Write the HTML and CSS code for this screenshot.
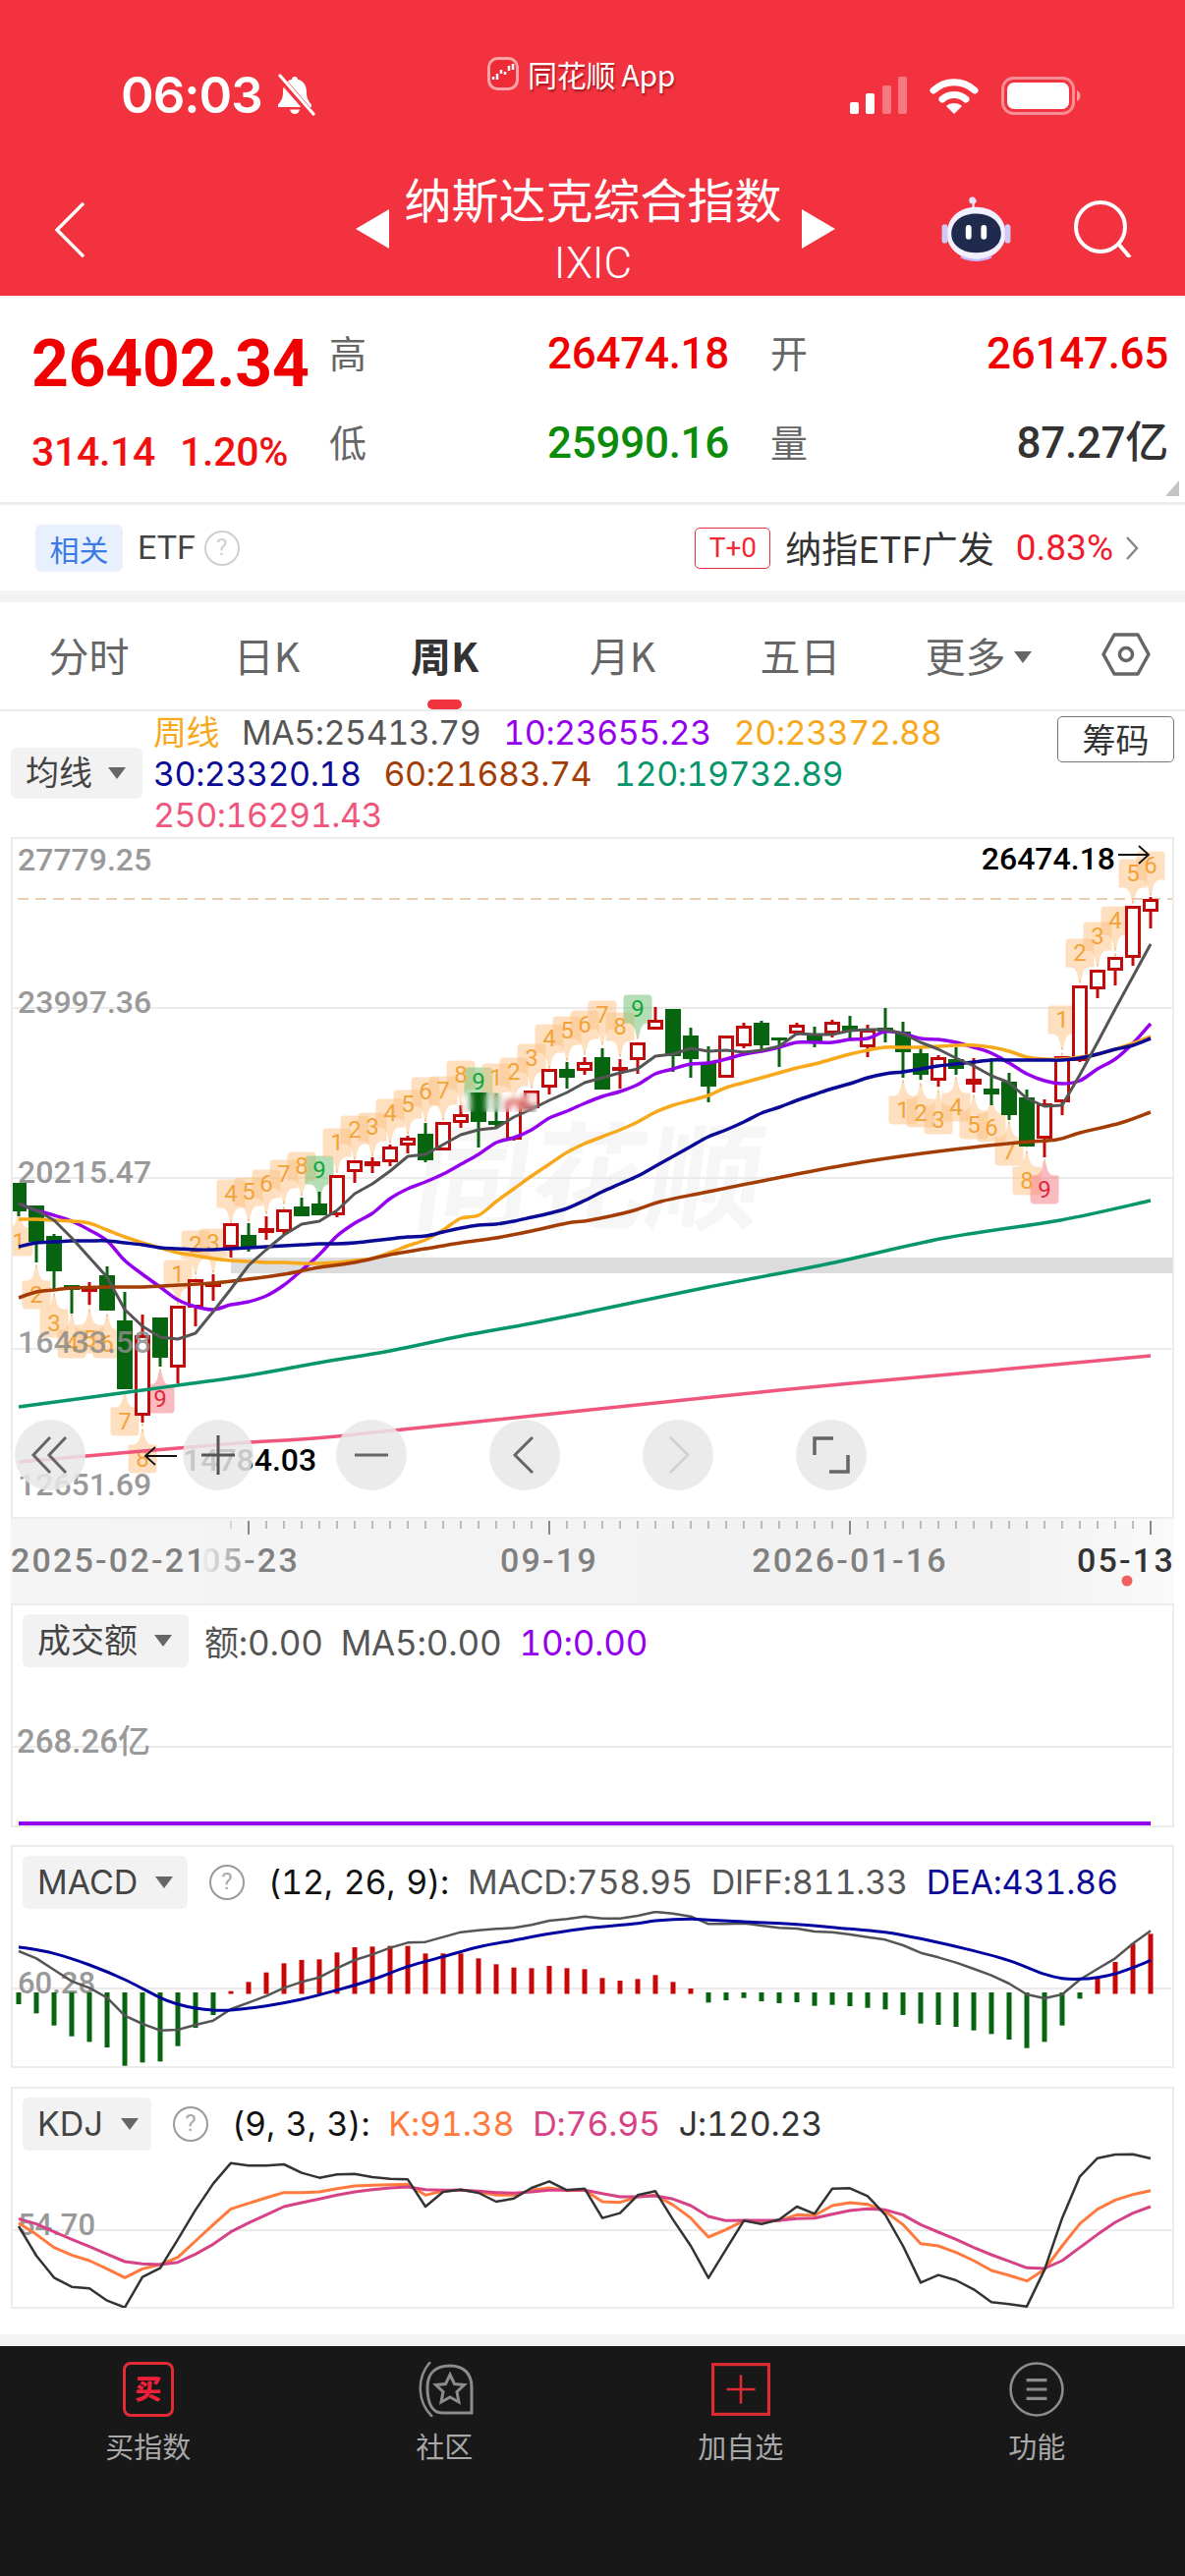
FILE: index.html
```html
<!DOCTYPE html>
<html lang="zh-CN">
<head>
<meta charset="utf-8">
<title>纳斯达克综合指数</title>
<link rel="stylesheet" href="styles.css">
</head>
<body>
<div class="page">
  <header class="hdr">
    <div class="status">
      <div class="st-left">
        <span class="time">06:03</span>
        <svg class="bell" viewBox="0 0 42 44"><path d="M21 3c-1.800 0-3 1.200-3 2.800C11.500 7.500 9 13 9 19c0 6-2 9-5 12.500V34h34v-2.500C35 28 33 25 33 19c0-6-2.500-11.500-9-13.200C24 4.200 22.800 3 21 3zM16 36.500c.8 3 2.600 4.500 5 4.500s4.200-1.500 5-4.500z" fill="#fff"/><path d="M5 3l34 39" stroke="#f2323f" stroke-width="7"/><path d="M6 2l34 39" stroke="#fff" stroke-width="3.200" stroke-linecap="round"/></svg>
      </div>
      <div class="st-app">
        <svg class="app-logo" viewBox="0 0 32 34"><rect x="1.500" y="1.500" width="29" height="31" rx="9" fill="#ee2b36" stroke="#f9a5a8" stroke-width="3"/><path d="M6 20v3M10 17v6M14 13v4M18 15v3M22 9v5M26 7v6" stroke="#fff" stroke-width="2.500"/></svg>
        <span class="app-name">同花顺 App</span>
      </div>
      <div class="st-right">
        <svg class="signal" viewBox="0 0 58 38"><rect x="0" y="26" width="9" height="12" rx="2" fill="#fff"/><rect x="16" y="17" width="9" height="21" rx="2" fill="#fff"/><rect x="33" y="9" width="9" height="29" rx="2" fill="#fff" opacity=".35"/><rect x="49" y="0" width="9" height="38" rx="2" fill="#fff" opacity=".35"/></svg>
        <svg class="wifi" viewBox="0 0 50 38"><path d="M4 14C16 3 34 3 46 14" stroke="#fff" stroke-width="7" fill="none" stroke-linecap="round"/><path d="M13 23c7-6 17-6 24 0" stroke="#fff" stroke-width="7" fill="none" stroke-linecap="round"/><path d="M25 38l-8-8c4-4 12-4 16 0z" fill="#fff"/></svg>
        <svg class="battery" viewBox="0 0 81 39"><rect x="1.500" y="1.500" width="72" height="36" rx="11" fill="none" stroke="#fff" stroke-opacity=".45" stroke-width="3"/><rect x="6" y="6" width="63" height="27" rx="7" fill="#fff"/><path d="M77 14c2.500 1 3.500 3 3.500 5.500S79.500 24 77 25z" fill="#fff" fill-opacity=".5"/></svg>
      </div>
    </div>
    <div class="nav">
      <svg class="back" viewBox="0 0 33 60" preserveAspectRatio="none"><path d="M30 2L3 30l27 28" fill="none" stroke="#fff" stroke-width="3.500"/></svg>
      <div class="title-wrap">
        <span class="tri-l"></span>
        <div class="title-stack">
          <div class="title">纳斯达克综合指数</div>
          <div class="code">IXIC</div>
        </div>
        <span class="tri-r"></span>
      </div>
      <div class="nav-right">
        <svg class="robot" viewBox="0 0 72 68"><path d="M34 14c-2-4-1-8 2-10" stroke="#e8e4ff" stroke-width="2.500" fill="none"/><circle cx="32" cy="4" r="3.500" fill="#e8e4ff"/><path d="M36 11c17 0 29 10 31 26 1 16-13 29-31 29S4 53 5 37C7 21 19 11 36 11z" fill="#f2f0ff"/><rect x="0" y="29" width="6" height="20" rx="3" fill="#cfc9f5"/><rect x="66" y="29" width="6" height="20" rx="3" fill="#cfc9f5"/><path d="M36 18c14 0 25 7 26 20 1 12-10 21-26 21S9 50 10 38c1-13 12-20 26-20z" fill="#1f2a4d"/><rect x="25" y="30" width="6" height="15" rx="3" fill="#fff"/><rect x="41" y="30" width="6" height="15" rx="3" fill="#fff"/><path d="M20 63c10 5 22 5 32 0" stroke="#c9b8ff" stroke-width="2.500" fill="none"/></svg>
        <svg class="search" viewBox="0 0 60 58"><circle cx="28" cy="27" r="25" fill="none" stroke="#fff" stroke-width="4"/><path d="M46 44l12 14" stroke="#fff" stroke-width="4"/></svg>
      </div>
    </div>
  </header>

  <section class="quote">
    <div class="q-left">
      <div class="q-price">26402.34</div>
      <div class="q-sub"><span>314.14</span><span>1.20%</span></div>
    </div>
    <div class="q-grid">
      <div class="q-cell"><span class="q-lab">高</span><span class="q-val red">26474.18</span></div>
      <div class="q-cell"><span class="q-lab">开</span><span class="q-val red">26147.65</span></div>
      <div class="q-cell"><span class="q-lab">低</span><span class="q-val green">25990.16</span></div>
      <div class="q-cell"><span class="q-lab">量</span><span class="q-val dark">87.27亿</span></div>
    </div>
    <span class="q-corner"></span>
  </section>

  <section class="etf">
    <div class="etf-left">
      <span class="etf-chip">相关</span>
      <span class="etf-name">ETF</span>
      <span class="help light">?</span>
    </div>
    <div class="etf-right">
      <span class="t0">T+0</span>
      <span class="etf-fund">纳指ETF广发</span>
      <span class="etf-pct">0.83%</span>
      <svg class="etf-chev" viewBox="0 0 14 26"><path d="M2 2l10 11L2 24" fill="none" stroke="#888" stroke-width="2.500"/></svg>
    </div>
  </section>
  <div class="strip"></div>

  <nav class="tabs">
    <div class="tab">分时</div>
    <div class="tab">日K</div>
    <div class="tab active">周K</div>
    <div class="tab">月K</div>
    <div class="tab">五日</div>
    <div class="tab">更多<span class="tab-tri"></span></div>
    <svg class="hex" viewBox="0 0 50 44"><path d="M13 2h24l11 20-11 20H13L2 22z" fill="none" stroke="#666" stroke-width="3.500" stroke-linejoin="round"/><circle cx="25" cy="22" r="6.500" fill="none" stroke="#666" stroke-width="3.500"/></svg>
  </nav>

  <section class="legend">
    <div class="chip chip-ma">均线<span class="chip-tri"></span></div>
    <div class="legend-lines">
      <div class="lg-row"><span class="c-orange">周线</span><span class="c-grey">MA5:25413.79</span><span class="c-purple">10:23655.23</span><span class="c-orange">20:23372.88</span></div>
      <div class="lg-row"><span class="c-navy">30:23320.18</span><span class="c-brown">60:21683.74</span><span class="c-teal">120:19732.89</span></div>
      <div class="lg-row"><span class="c-pink">250:16291.43</span></div>
    </div>
    <div class="chip-btn">筹码</div>
  </section>

  <section class="panel main-panel">
    <svg id="main" class="plot" viewBox="13 854 1180 690" width="1180" height="690"></svg>
    <div class="blur-patch"></div>
    <div class="ctrls">
      <div class="ctrl"><svg viewBox="0 0 40 40"><path d="M20 2L3 20l17 18M36 2L19 20l17 18" fill="none" stroke="#666" stroke-width="3"/></svg></div>
      <div class="ctrl ctrl-plus"><svg viewBox="0 0 40 40"><path d="M20 0v40M3 20h34" fill="none" stroke="#555" stroke-width="3"/></svg></div>
      <div class="ctrl"><svg viewBox="0 0 40 40"><path d="M3 20h34" fill="none" stroke="#666" stroke-width="3"/></svg></div>
      <div class="ctrl"><svg viewBox="0 0 40 40"><path d="M28 2L10 20l18 18" fill="none" stroke="#666" stroke-width="3"/></svg></div>
      <div class="ctrl"><svg viewBox="0 0 40 40"><path d="M12 2l18 18-18 18" fill="none" stroke="#d2d2d2" stroke-width="3"/></svg></div>
      <div class="ctrl"><svg viewBox="0 0 40 40"><path d="M22 3H3v17M37 20v17H18" fill="none" stroke="#666" stroke-width="3.500"/></svg></div>
    </div>
  </section>

  <section class="axis">
    <svg id="axis" class="plot" viewBox="11 1546 1184 86" width="1184" height="86">
      <defs><linearGradient id="fade"><stop offset="0" stop-color="#f0f0f0"/><stop offset=".55" stop-color="#808080"/></linearGradient></defs>
    </svg>
  </section>

  <section class="panel vol-panel">
    <div class="pn-head">
      <div class="chip chip-vol">成交额<span class="chip-tri"></span></div>
      <div class="vol-vals"><span class="c-grey">额:0.00</span><span class="c-grey">MA5:0.00</span><span class="c-purple">10:0.00</span></div>
    </div>
    <svg id="vol" class="plot" viewBox="13 1699 1180 159" width="1180" height="159"></svg>
  </section>

  <section class="panel macd-panel">
    <div class="pn-head">
      <div class="chip chip-macd">MACD<span class="chip-tri"></span></div>
      <span class="help">?</span>
      <div class="ind-vals"><span class="c-black">(12, 26, 9):</span><span class="c-grey">MACD:758.95</span><span class="c-grey">DIFF:811.33</span><span class="c-navy">DEA:431.86</span></div>
    </div>
    <svg id="macd" class="plot" viewBox="13 1945 1180 158" width="1180" height="158"></svg>
  </section>

  <section class="panel kdj-panel">
    <div class="pn-head">
      <div class="chip chip-kdj">KDJ<span class="chip-tri"></span></div>
      <span class="help">?</span>
      <div class="ind-vals"><span class="c-black">(9, 3, 3):</span><span class="c-k">K:91.38</span><span class="c-d">D:76.95</span><span class="c-j">J:120.23</span></div>
    </div>
    <svg id="kdj" class="plot" viewBox="13 2190 1180 158" width="1180" height="158"></svg>
  </section>

  <div class="foot-gap"></div>

  <footer class="bar">
    <div class="bar-item">
      <span class="ico-buy">买</span>
      <span class="bar-lab">买指数</span>
    </div>
    <div class="bar-item">
      <svg class="bar-ico" viewBox="0 0 60 56"><path d="M16 0C2 16 2 40 18 56" fill="none" stroke="#8c8c8c" stroke-width="2.500"/><path d="M58 52H28C18 52 13 42 13 26 13 12 21 4 36 4s22 9 22 22z" fill="none" stroke="#8c8c8c" stroke-width="3"/><path d="M36 13l4.500 9.500 10 1-7.500 7 2 10.500-9-5-9 5 2-10.500-7.500-7 10-1z" fill="none" stroke="#8c8c8c" stroke-width="3"/></svg>
      <span class="bar-lab">社区</span>
    </div>
    <div class="bar-item">
      <svg class="bar-ico" viewBox="0 0 58 52"><rect x="1.500" y="1.500" width="55" height="49" fill="none" stroke="#e02b32" stroke-width="3"/><path d="M29 12v28M15 26h28" stroke="#e02b32" stroke-width="2.500"/></svg>
      <span class="bar-lab">加自选</span>
    </div>
    <div class="bar-item">
      <svg class="bar-ico" viewBox="0 0 54 54"><circle cx="27" cy="27" r="25.500" fill="none" stroke="#8c8c8c" stroke-width="2.500"/><path d="M17 18h20M17 27h20M17 36h20" stroke="#8c8c8c" stroke-width="3"/></svg>
      <span class="bar-lab">功能</span>
    </div>
  </footer>
</div>
<script src="chart.js"></script>
</body>
</html>
```
FILE: styles.css
```css
* { box-sizing: border-box; }
html, body { margin: 0; padding: 0; background: #fff; }
body { font-family: Roboto, "Noto Sans CJK SC", sans-serif; color: #333; }
.page { width: 1206px; height: 2622px; overflow: hidden; display: flex; flex-direction: column; }

.hdr { background: #f2323f; height: 301px; color: #fff; flex: none; }
.status { display: grid; grid-template-columns: 371px 189px 1fr; height: 62px; padding: 58px 106px 0 123px; box-sizing: content-box; }
.st-left { display: flex; align-items: center; gap: 12px; padding-top: 8px; }
.time { font: 600 51px/62px Inter, sans-serif; letter-spacing: -1px; }
.bell { width: 42px; height: 44px; }
.st-app { display: flex; gap: 9px; height: 36px; align-items: center; margin: -1px 0 0 2px; }
.app-logo { width: 32px; height: 34px; flex: none; }
.app-name { font: 400 30px/36px "Noto Sans CJK SC", sans-serif; white-space: nowrap; text-shadow: 1px 2px 2px rgba(90,0,0,.55); letter-spacing: -.3px; }
.st-right { display: flex; align-items: center; justify-content: flex-end; gap: 23px; padding-top: 8px; }
.signal { width: 58px; height: 38px; }
.wifi { width: 50px; height: 38px; }
.battery { width: 81px; height: 39px; }

.nav { display: grid; grid-template-columns: 362px 488px 1fr; margin-top: 64px; height: 104px; }
.back { width: 33px; height: 58px; margin: 21px 0 0 55px; }
.title-wrap { display: flex; justify-content: space-between; align-items: flex-start; }
.tri-l, .tri-r { width: 0; height: 0; margin-top: 29px; border-top: 20px solid transparent; border-bottom: 20px solid transparent; }
.tri-l { border-right: 34px solid #fff; }
.tri-r { border-left: 34px solid #fff; }
.title-stack { text-align: center; margin-left: -5px; }
.title { font: 400 48px/60px "Noto Sans CJK SC", sans-serif; white-space: nowrap; margin-top: -13px; }
.code { font: 300 44px/46px Roboto, sans-serif; margin-top: 14px; }
.nav-right { display: flex; padding: 16px 0 0 108px; gap: 63px; align-items: flex-start; }
.robot { width: 71px; height: 66px; }
.search { width: 60px; height: 58px; margin-top: 4px; }

.quote { height: 210px; position: relative; display: flex; padding-left: 32px; flex: none; }
.q-left { width: 303px; }
.q-price { font: 700 66px/80px Roboto, sans-serif; color: #f00000; letter-spacing: -.2px; margin-top: 30px; }
.q-sub { display: flex; gap: 25px; font: 500 41px/48px Roboto, sans-serif; color: #f01010; margin-top: 25px; letter-spacing: -.3px; }
.q-grid { display: grid; grid-template-columns: 407px 405px; column-gap: 42px; grid-auto-rows: 91px; padding-top: 32px; }
.q-cell { display: flex; justify-content: space-between; align-items: center; height: 54px; }
.q-lab { font: 400 38px/54px "Noto Sans CJK SC", sans-serif; color: #666; margin-bottom: 4px; }
.q-val { font: 500 44px/54px Roboto, "Noto Sans CJK SC", sans-serif; letter-spacing: -.3px; }
.red { color: #f00000; }
.green { color: #0a8c0a; }
.dark { color: #333; }
.q-corner { position: absolute; right: 6px; bottom: 6px; width: 0; height: 0; border-bottom: 16px solid #c4c4c4; border-left: 14px solid transparent; }

.etf { height: 90px; border-top: 3px solid #eee; display: flex; justify-content: space-between; align-items: center; padding: 0 47px 0 36px; flex: none; }
.etf-left, .etf-right { display: flex; align-items: center; }
.etf-chip { width: 89px; height: 48px; background: #e9f0fd; border-radius: 6px; color: #3c7be3; font: 400 30px/48px "Noto Sans CJK SC", sans-serif; text-align: center; }
.etf-name { font: 400 34px/49px Roboto, sans-serif; margin-left: 15px; color: #444; }
.help { width: 36px; height: 36px; border: 2.500px solid #9a9a9a; border-radius: 50%; color: #aaa; font: 400 24px/31px Roboto, sans-serif; text-align: center; flex: none; }
.help.light { border-color: #cfcfcf; color: #cfcfcf; margin-left: 9px; }
.t0 { width: 77px; height: 42px; border: 1.500px solid #e8303c; border-radius: 5px; color: #ee2b36; font: 400 28px/39px Roboto, sans-serif; text-align: center; }
.etf-fund { font: 400 37px/49px "Noto Sans CJK SC", sans-serif; margin-left: 15px; color: #333; white-space: nowrap; }
.etf-pct { font: 400 37px/49px Roboto, sans-serif; color: #ee1c2c; margin-left: 22px; }
.etf-chev { width: 14px; height: 26px; margin-left: 12px; }

.strip { height: 19px; background: linear-gradient(#f3f3f3 12px, #fff 12px); flex: none; }
.foot-gap { height: 38px; background: linear-gradient(#fff 26px, #f3f3f3 26px); flex: none; }

.tabs { height: 104px; border-bottom: 2px solid #eaeaea; display: grid; grid-template-columns: repeat(6, 181px) 1fr; align-items: start; flex: none; }
.tab { font: 400 41px/60px "Noto Sans CJK SC", Roboto, sans-serif; color: #666; text-align: center; padding-top: 16px; height: 102px; position: relative; white-space: nowrap; }
.tab.active { color: #333; font-weight: 700; }
.tab.active::after { content: ""; position: absolute; left: 73px; bottom: 0; width: 35px; height: 10px; border-radius: 5px; background: #f0333f; }
.tab-tri { display: inline-block; width: 0; height: 0; border-left: 9px solid transparent; border-right: 9px solid transparent; border-top: 12px solid #666; margin-left: 8px; vertical-align: 9px; }
.hex { width: 50px; height: 44px; margin: 24px 0 0 35px; }

.legend { height: 128px; position: relative; display: flex; flex: none; }
.chip { background: #f2f2f2; border-radius: 6px; color: #444; font: 400 34px/52px Inter, "Noto Sans CJK SC", sans-serif; display: flex; align-items: center; flex: none; white-space: nowrap; }
.chip-tri { width: 0; height: 0; border-left: 9px solid transparent; border-right: 9px solid transparent; border-top: 12px solid #666; margin-left: 16px; }
.chip-ma { width: 134px; height: 52px; margin: 37px 0 0 11px; padding-left: 15px; }
.legend-lines { margin-left: 11px; padding-top: 1px; width: 900px; }
.lg-row { display: flex; gap: 23px; font: 400 34px/42px Inter, "Noto Sans CJK SC", sans-serif; font-variant-numeric: tabular-nums; white-space: nowrap; letter-spacing: -.47px; }
.c-orange { color: #f7a81b; }
.c-grey { color: #555; }
.c-purple { color: #9400ee; }
.c-navy { color: #0a0a96; }
.c-brown { color: #a33c05; }
.c-teal { color: #07966b; }
.c-pink { color: #f0557c; }
.c-black { color: #111; word-spacing: 2px; }
.c-k { color: #ff7a3c; }
.c-d { color: #d64285; }
.c-j { color: #333; }
.chip-btn { position: absolute; left: 1076px; top: 5px; width: 119px; height: 47px; border: 1.500px solid #777; border-radius: 5px; font: 400 34px/44px "Noto Sans CJK SC", sans-serif; text-align: center; color: #333; }

.panel { margin: 0 11px; border: 2px solid #ececec; position: relative; flex: none; background: #fff; }
.main-panel { height: 694px; }
.plot { display: block; }
.plot text { font-family: Roboto, "Noto Sans CJK SC", sans-serif; }
.blur-patch { position: absolute; left: 456px; top: 258px; width: 78px; height: 20px; backdrop-filter: blur(3px); }
.ctrls { position: absolute; left: 2px; top: 591px; display: flex; gap: 84px; }
.ctrl { width: 72px; height: 72px; border-radius: 50%; background: rgba(232,232,232,.86); display: flex; align-items: center; justify-content: center; }
.ctrl-plus { margin-left: 15px; }
.ctrl svg { width: 40px; height: 40px; }

.axis { margin: 0 11px; height: 86px; flex: none; background: linear-gradient(90deg, #f5f5f5 0, #f1f1f1 85%, #fafafa 100%); }

.vol-panel { height: 228px; }
.macd-panel { height: 227px; margin-top: 18px; }
.kdj-panel { height: 226px; margin-top: 19px; }
.pn-head { height: 65px; display: flex; align-items: center; padding: 9px 0 2px 10px; }
.pn-head .chip { height: 54px; }
.chip-vol { width: 169px; padding-left: 15px; }
.chip-vol .chip-tri { margin-left: 17px; }
.chip-macd { width: 168px; padding-left: 15px; }
.chip-macd .chip-tri { margin-left: 18px; }
.chip-kdj { width: 131px; padding-left: 15px; }
.chip-kdj .chip-tri { margin-left: 18px; }
.vol-vals { display: flex; gap: 18px; margin-left: 16px; padding-top: 3px; font: 400 35px/54px Inter, "Noto Sans CJK SC", sans-serif; font-variant-numeric: tabular-nums; white-space: nowrap; letter-spacing: -.2px; }
.ind-vals { display: flex; gap: 19px; margin-left: 24px; font: 400 34px/54px Inter, sans-serif; font-variant-numeric: tabular-nums; white-space: nowrap; letter-spacing: -.2px; }
.pn-head .help { margin-left: 22px; }

.bar { flex: 1; background: #181818; display: grid; grid-template-columns: repeat(4, 1fr); padding-top: 16px; align-items: start; }
.bar-item { display: flex; flex-direction: column; align-items: center; gap: 13px; }
.bar-ico { height: 56px; width: 60px; }
.ico-buy { width: 52px; height: 56px; border: 3px solid #e42b33; border-radius: 8px; color: #f0203a; font: 900 27px/48px "Noto Sans CJK SC", sans-serif; text-align: center; }
.bar-lab { font: 400 29px/32px "Noto Sans CJK SC", sans-serif; color: #a8a8a8; white-space: nowrap; }
```
FILE: chart.js
```js
var NS = 'http://www.w3.org/2000/svg';
function X(i) { return 19 + 18 * i; }
function el(svg, tag, attrs, text) {
  var e = document.createElementNS(NS, tag);
  for (var k in attrs) e.setAttribute(k, attrs[k]);
  if (text !== undefined) e.textContent = text;
  svg.appendChild(e);
  return e;
}
function pts(ys) { return ys.map(function (y, i) { return [i, y]; }); }
function pathOf(p, smooth) {
  var q = p.map(function (a) { return [X(a[0]), a[1]]; });
  var d = 'M' + q[0][0] + ' ' + q[0][1];
  for (var i = 1; i < q.length; i++) {
    if (!smooth) { d += 'L' + q[i][0] + ' ' + q[i][1]; continue; }
    var a = q[Math.max(i - 2, 0)], b = q[i - 1], c = q[i], e = q[Math.min(i + 1, q.length - 1)];
    d += 'C' + (b[0] + (c[0] - a[0]) / 6) + ' ' + (b[1] + (c[1] - a[1]) / 6) + ' ' +
      (c[0] - (e[0] - b[0]) / 6) + ' ' + (c[1] - (e[1] - b[1]) / 6) + ' ' + c[0] + ' ' + c[1];
  }
  return d;
}
function line(svg, p, color, w, smooth) {
  el(svg, 'path', { d: pathOf(p, smooth), fill: 'none', stroke: color, 'stroke-width': w, 'stroke-linejoin': 'round' });
}
function hline(svg, y, c, w) { el(svg, 'line', { x1: 0, x2: 1206, y1: y, y2: y, stroke: c || '#ebebeb', 'stroke-width': w || 2 }); }
function label(svg, x, y, t, c, anchor, size, weight) {
  el(svg, 'text', { x: x, y: y, fill: c, 'font-size': size || 32, 'text-anchor': anchor || 'start', 'font-weight': weight || 500 }, t);
}

/* ---------- main chart ---------- */
var CANDLES = [
 ['g',1204,1204,1233,1238],['g',1227,1227,1264,1285],['g',1256,1258,1294,1312],['g',1308,1308,1313,1337],
 ['f',1305,1310,1315,1328],['g',1289,1298,1334,1334],['g',1315,1344,1414,1414],['r',1338,1359,1441,1448],
 ['g',1341,1341,1382,1391],['r',1329,1329,1392,1408],['r',1302,1302,1331,1350],['r',1297,1305,1310,1324],
 ['r',1245,1245,1270,1280],['g',1245,1257,1270,1274],['r',1238,1250,1255,1262],['r',1231,1231,1254,1256],
 ['g',1219,1228,1238,1238],['g',1213,1225,1237,1237],['r',1196,1196,1237,1239],['r',1181,1181,1193,1204],
 ['r',1178,1182,1187,1194],['r',1165,1167,1183,1187],['r',1156,1158,1166,1174],['g',1143,1154,1181,1183],
 ['r',1142,1142,1171,1171],['r',1125,1134,1143,1148],['g',1112,1112,1142,1168],['g',1113,1141,1145,1148],
 ['r',1120,1120,1160,1161],['r',1110,1110,1128,1128],['r',1088,1088,1107,1114],['g',1081,1088,1097,1108],
 ['r',1076,1081,1090,1094],['g',1067,1076,1109,1109],['r',1078,1086,1090,1108],['r',1061,1061,1079,1093],
 ['r',1025,1038,1048,1048],['g',1027,1027,1075,1091],['g',1046,1054,1078,1097],['g',1065,1081,1106,1122],
 ['r',1054,1054,1097,1097],['r',1041,1044,1065,1067],['g',1039,1041,1064,1068],['g',1056,1056,1059,1086],
 ['r',1041,1043,1052,1054],['g',1045,1052,1060,1066],['r',1038,1040,1052,1056],['g',1034,1044,1049,1058],
 ['r',1043,1048,1066,1076],['g',1026,1046,1050,1061],['g',1040,1050,1071,1097],['g',1066,1072,1094,1099],
 ['r',1074,1076,1100,1106],['g',1066,1078,1088,1094],['f',1077,1098,1104,1112],['g',1077,1108,1114,1125],
 ['g',1092,1101,1135,1140],['g',1109,1117,1167,1167],['r',1119,1123,1159,1178],['r',1075,1075,1122,1135],
 ['r',1003,1003,1080,1081],['r',987,987,1007,1016],['r',974,974,988,1003],['r',922,922,975,983],
 ['r',913,915,928,945]
];
/* [candle index, digit, tag centre y, side: a = above, b = below, colour: o/g/p] */
var TAGS = [
 [0,1,1264,'b','o'],[1,2,1318,'b','o'],[2,3,1347,'b','o'],[3,4,1368,'b','o'],[4,5,1363,'b','o'],[5,6,1368,'b','o'],[6,7,1447,'b','o'],[7,8,1485,'b','o'],[8,9,1424,'b','p'],
 [9,1,1297,'a','o'],[10,2,1267,'a','o'],[11,3,1265,'a','o'],[12,4,1215,'a','o'],[13,5,1213,'a','o'],[14,6,1205,'a','o'],[15,7,1195,'a','o'],[16,8,1187,'a','o'],[17,9,1191,'a','g'],
 [18,1,1163,'a','o'],[19,2,1150,'a','o'],[20,3,1147,'a','o'],[21,4,1133,'a','o'],[22,5,1124,'a','o'],[23,6,1111,'a','o'],[24,7,1110,'a','o'],[25,8,1094,'a','o'],[26,9,1101,'a','g'],
 [27,1,1097,'a','o'],[28,2,1091,'a','o'],[29,3,1077,'a','o'],[30,4,1057,'a','o'],[31,5,1049,'a','o'],[32,6,1043,'a','o'],[33,7,1033,'a','o'],[34,8,1045,'a','o'],[35,9,1027,'a','g'],
 [50,1,1130,'b','o'],[51,2,1133,'b','o'],[52,3,1140,'b','o'],[53,4,1127,'b','o'],[54,5,1145,'b','o'],[55,6,1148,'b','o'],[56,7,1172,'b','o'],[57,8,1202,'b','o'],[58,9,1211,'b','p'],
 [59,1,1038,'a','o'],[60,2,970,'a','o'],[61,3,953,'a','o'],[62,4,937,'a','o'],[63,5,889,'a','o'],[64,6,881,'a','o']
];
var TAGC = {
  o: { bg: 'rgba(252,190,125,.48)', fg: '#f2a338' },
  g: { bg: 'rgba(110,190,110,.5)', fg: '#15a53a' },
  p: { bg: 'rgba(245,120,130,.5)', fg: '#e0283c' }
};
var MA5 = [1225,1232,1242,1260,1280,1300,1333,1350,1361,1363,1357,1335,1312,1288,1272,1257,1246,1243,1232,1215,1205,1192,1177,1175,1165,1155,1150,1148,1137,1129,1120,1112,1102,1097,1092,1088,1075,1073,1067,1070,1069,1071,1069,1065,1052,1053,1053,1049,1048,1048,1052,1061,1068,1077,1085,1095,1102,1118,1126,1125,1094,1061,1027,994,961];
var MA10 = [1225,1232,1237,1243,1252,1263,1283,1297,1310,1323,1330,1333,1328,1325,1319,1308,1293,1277,1258,1245,1235,1220,1210,1203,1195,1185,1175,1163,1158,1150,1138,1131,1123,1116,1111,1104,1093,1088,1083,1082,1078,1073,1070,1066,1061,1061,1061,1058,1057,1050,1052,1057,1058,1061,1066,1072,1082,1093,1100,1103,1100,1088,1078,1062,1042];
var MA20 = [1241,1241,1242,1243,1245,1252,1259,1265,1270,1275,1278,1281,1283,1284,1285,1285,1286,1286,1285,1283,1281,1275,1268,1262,1252,1240,1237,1223,1210,1197,1185,1173,1164,1157,1150,1142,1132,1125,1120,1115,1107,1102,1097,1092,1087,1083,1078,1073,1069,1066,1066,1066,1065,1064,1064,1066,1070,1076,1078,1078,1076,1073,1068,1062,1055];
var MA30 = [1269,1265,1264,1263,1263,1263,1265,1267,1270,1271,1272,1272,1271,1270,1269,1268,1267,1266,1266,1265,1263,1261,1259,1258,1254,1250,1247,1246,1243,1239,1235,1230,1222,1213,1205,1197,1187,1177,1167,1157,1150,1142,1133,1127,1120,1114,1108,1103,1097,1093,1091,1088,1085,1083,1081,1079,1079,1079,1079,1079,1077,1073,1068,1064,1057];
var MA60 = [[0,1321],[1,1315],[2,1313],[3,1311],[5,1310],[7,1310],[9,1308],[11,1306],[13,1302],[15,1297],[17,1290],[19,1285],[21,1277],[23,1271],[25,1265],[27,1260],[29,1253],[31,1245],[32.3,1242],[34.6,1233],[36.3,1223],[39,1213],[44,1195],[48,1182],[52.4,1171],[56.5,1163],[58.7,1160],[60,1153],[62.3,1143],[64,1132]];
var MA120 = [[0,1432],[7,1415],[9,1410],[13,1400],[17,1387],[21,1375],[25,1360],[29,1347],[32.3,1335],[39,1310],[45.6,1287],[52.4,1260],[58.9,1242],[64,1222]];
var MA250 = [[0,1488],[7,1477],[13,1468],[18,1462],[32.3,1435],[43,1415],[53.8,1397],[64,1380]];

function tagPath(cx, cy, side) {
  var w = 14.5, h = 14.5, r = 4, s = side === 'a' ? 1 : -1;
  var by = cy + s * h, ty = cy - s * h, tip = by + s * 13;
  return 'M' + (cx - w) + ' ' + (ty + s * r) + 'Q' + (cx - w) + ' ' + ty + ' ' + (cx - w + r) + ' ' + ty +
    'H' + (cx + w - r) + 'Q' + (cx + w) + ' ' + ty + ' ' + (cx + w) + ' ' + (ty + s * r) +
    'V' + by + 'H' + (cx + 10) + 'Q' + (cx + 3) + ' ' + by + ' ' + (cx + 1.5) + ' ' + tip +
    'H' + (cx - 1.5) + 'Q' + (cx - 3) + ' ' + by + ' ' + (cx - 10) + ' ' + by + 'H' + (cx - w) + 'Z';
}

function drawMain() {
  var s = document.getElementById('main');
  el(s, 'text', { x: 418, y: 1242, 'font-size': 118, 'font-weight': 700, fill: '#f6f6f6', transform: 'skewX(-8) translate(174 0)' }, '同花顺');
  [1026, 1199, 1373].forEach(function (y) { hline(s, y); });
  el(s, 'rect', { x: 235, y: 1280, width: 970, height: 16, fill: '#dcdcdc' });
  el(s, 'line', { x1: 0, x2: 1206, y1: 915, y2: 915, stroke: '#e2bd9c', 'stroke-width': 1.5, 'stroke-dasharray': '11 7' });

  TAGS.forEach(function (t) {
    var c = CANDLES[t[0]], cx = X(t[0]), cy = t[2], side = t[3], col = TAGC[t[4]];
    var tip = side === 'a' ? cy + 27.5 : cy - 27.5, end = side === 'a' ? c[1] : c[4];
    el(s, 'line', { x1: cx, x2: cx, y1: tip, y2: end, stroke: '#f0b070', 'stroke-width': 1.5, 'stroke-dasharray': '3 3' });
    el(s, 'path', { d: tagPath(cx, cy, side), fill: col.bg });
  });

  CANDLES.forEach(function (c, i) {
    var x = X(i), t = c[0], col = t === 'g' ? '#07640f' : '#c20a0a';
    el(s, 'line', { x1: x, x2: x, y1: c[1], y2: c[4], stroke: col, 'stroke-width': 3 });
    if (t === 'r') {
      el(s, 'rect', { x: x - 6.5, y: c[2] + 1.5, width: 13, height: Math.max(c[3] - c[2] - 3, 1), fill: '#fff', stroke: col, 'stroke-width': 3 });
    } else {
      el(s, 'rect', { x: x - 8, y: c[2], width: 16, height: Math.max(c[3] - c[2], 3), fill: col });
    }
  });

  TAGS.forEach(function (t) {
    var col = TAGC[t[4]];
    el(s, 'text', { x: X(t[0]), y: t[2] + 8, 'font-size': 24, 'text-anchor': 'middle', fill: col.fg }, t[1]);
  });

  line(s, pts(MA10), '#9400ee', 3.5, true);
  line(s, pts(MA20), '#f7a81b', 3.5, true);
  line(s, pts(MA30), '#0a0a96', 3.5, true);
  line(s, MA60, '#a33c05', 3.5, true);
  line(s, MA120, '#07966b', 3.5, true);
  line(s, MA250, '#f0557c', 3.5, true);
  line(s, pts(MA5), '#555', 3, false);

  [['27779.25', 886], ['23997.36', 1031], ['20215.47', 1204], ['16433.58', 1377], ['12651.69', 1522]].forEach(function (l) {
    label(s, 18, l[1], l[0], l[0] === '16433.58' ? 'rgba(140,140,140,.85)' : '#999');
  });

  label(s, 1135, 885, '26474.18', '#000', 'end', 32, 500);
  el(s, 'path', { d: 'M1138 870h31M1159 861l10 9-10 9', fill: 'none', stroke: '#111', 'stroke-width': 1.8 });
  label(s, 186, 1497, '14784.03', '#000', 'start', 32, 500);
  el(s, 'path', { d: 'M180 1482h-32M158 1473l-10 9 10 9', fill: 'none', stroke: '#111', 'stroke-width': 1.8 });
}

function drawAxis() {
  var s = document.getElementById('axis');
  for (var i = 12; i <= 64; i++) {
    var major = i === 13 || i === 30 || i === 47 || i === 64;
    el(s, 'line', { x1: X(i), x2: X(i), y1: 1548, y2: major ? 1562 : 1556, stroke: major ? '#888' : '#bbb', 'stroke-width': 2, opacity: i === 12 ? .5 : 1 });
  }
  var lab = [['2025-02-21', 11, 'start', '#808080'], ['05-23', 255, 'middle', 'url(#fade)'], ['09-19', 559, 'middle', '#808080'], ['2026-01-16', 865, 'middle', '#808080'], ['05-13', 1146, 'middle', '#333']];
  lab.forEach(function (l) {
    el(s, 'text', { x: l[1], y: 1600, 'font-size': 34, 'font-weight': 500, fill: l[3], 'text-anchor': l[2], 'letter-spacing': 2.2 }, l[0]);
  });
  el(s, 'circle', { cx: 1147, cy: 1609, r: 5.5, fill: '#f0605f' });
}

function drawVol() {
  var s = document.getElementById('vol');
  hline(s, 1778);
  label(s, 17, 1784, '268.26亿', '#999', 'start', 33);
  el(s, 'rect', { x: 19, y: 1854, width: 1152, height: 4, fill: '#9400ee' });
}

var Z = function (z) { return 1860 + z / 3; };
var HIST = [540,568,605,638,655,672,728,718,715,668,612,573,500,472,443,415,405,403,382,366,364,362,362,385,385,385,400,418,428,430,423,430,433,460,468,463,451,472,492,535,528,521,531,537,534,545,542,546,551,556,573,599,603,609,620,631,648,674,655,605,523,460,411,355,325];
var DIFF = [378,400,435,470,490,520,575,600,620,618,603,590,555,535,515,490,472,458,430,405,388,368,352,350,335,320,314,310,307,298,285,280,272,278,278,270,258,263,272,295,295,293,300,307,309,318,320,327,335,343,360,383,397,413,432,452,477,510,522,510,465,432,400,355,316];
var DEA = [[0,365],[2,385],[4,420],[6,465],[8,520],[9,540],[10,552],[11,558],[12,558],[14,545],[16,525],[18,497],[20,465],[22,425],[24,395],[26,365],[28,345],[30,325],[32.3,307],[35,293],[36,285],[38,280],[39,283],[41,288],[44,296],[47,310],[49,320],[51,340],[54,377],[56,407],[58,448],[59,461],[60,463],[61,458],[62,447],[63,428],[64,406]];

function drawMacd() {
  var s = document.getElementById('macd');
  hline(s, 2024);
  label(s, 18, 2029, '60.28', '#999', 'start', 31);
  HIST.forEach(function (z, i) {
    var red = z < 507;
    var y1 = red ? Z(z) : 2028, y2 = red ? 2029.5 : Z(z);
    el(s, 'rect', { x: X(i) - 2.5, y: y1, width: 5, height: y2 - y1, fill: red ? '#c80808' : '#07640f' });
  });
  line(s, pts(DIFF).map(function (p) { return [p[0], Z(p[1])]; }), '#555', 2.5, false);
  line(s, DEA.map(function (p) { return [p[0], Z(p[1])]; }), '#0000a0', 3, true);
}

var KK = [1205,1240,1280,1303,1320,1345,1372,1345,1332,1310,1260,1210,1162,1145,1128,1112,1112,1110,1100,1092,1090,1088,1087,1120,1107,1104,1110,1120,1120,1105,1098,1106,1105,1140,1142,1125,1120,1150,1190,1248,1225,1198,1200,1198,1180,1182,1152,1143,1148,1170,1210,1268,1275,1295,1320,1350,1365,1382,1347,1275,1207,1163,1135,1118,1106];
var DD = [1192,1208,1232,1255,1277,1300,1323,1330,1332,1325,1300,1270,1232,1205,1180,1155,1143,1132,1120,1110,1103,1098,1095,1103,1105,1105,1108,1112,1114,1110,1105,1105,1105,1115,1125,1125,1122,1132,1152,1185,1198,1197,1197,1197,1192,1190,1178,1167,1162,1165,1180,1210,1233,1255,1280,1302,1322,1342,1344,1320,1280,1240,1203,1175,1155];
var JJ = [1215,1305,1372,1400,1405,1442,1463,1370,1343,1255,1165,1085,1022,1030,1030,1026,1052,1067,1057,1055,1065,1070,1072,1155,1110,1103,1113,1140,1130,1098,1078,1105,1100,1190,1175,1120,1108,1195,1275,1373,1285,1198,1208,1195,1155,1177,1100,1099,1123,1180,1275,1387,1364,1380,1408,1447,1453,1460,1348,1190,1063,1007,996,995,1008];

function drawKdj() {
  var s = document.getElementById('kdj');
  hline(s, 2269);
  label(s, 18, 2274, '54.70', '#999', 'start', 31);
  function m(a) { return pts(a).map(function (p) { return [p[0], Z(p[1])]; }); }
  line(s, m(KK), '#ff7a3c', 3, false);
  line(s, m(DD), '#d64285', 3, false);
  line(s, m(JJ), '#333', 2.5, false);
}

drawMain();
drawAxis();
drawVol();
drawMacd();
drawKdj();
```
